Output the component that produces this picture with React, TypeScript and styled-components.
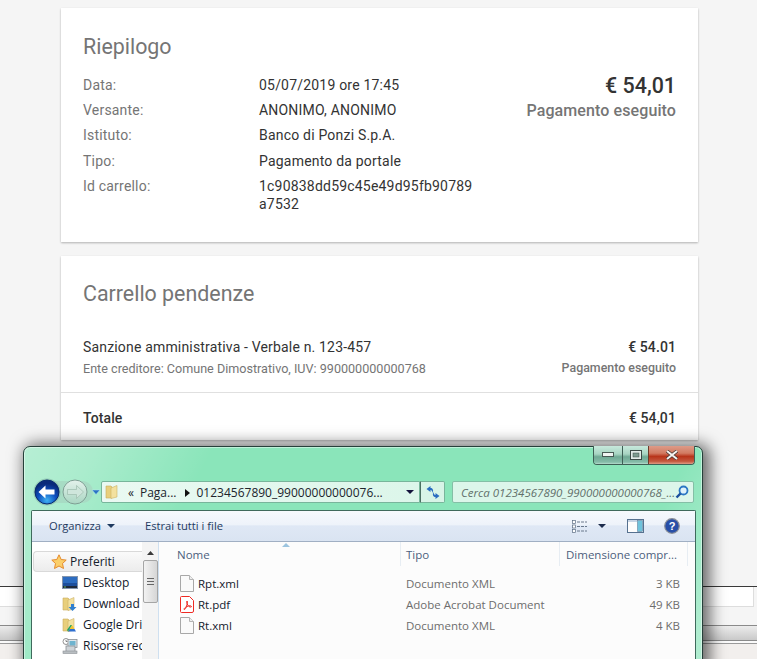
import React from "react";
import styled, { createGlobalStyle } from "styled-components";

const Global = createGlobalStyle`
  html, body { margin: 0; padding: 0; background: #f5f5f5; }
  body { font-family: Roboto, "Liberation Sans", sans-serif; }
  * { box-sizing: border-box; }
  svg { flex: none; }
`;

const Page = styled.div`
  position: relative;
  width: 757px;
  height: 659px;
  overflow: hidden;
  background: #f5f5f5;
  padding-top: 8px;
`;

const Card = styled.section`
  width: 637px;
  margin-left: 61px;
  background: #fff;
  box-shadow: 0 1px 2px rgba(0, 0, 0, 0.28);
`;

const SummaryCard = styled(Card)`
  height: 234px;
  padding: 26px 22px 0;
  display: grid;
  grid-template-columns: 392px 1fr;
`;

const CartCard = styled(Card)`
  height: 184px;
  margin-top: 14px;
`;

const Title = styled.h2`
  margin: 0;
  font-size: 21.4px;
  line-height: 26px;
  font-weight: 400;
  color: #757575;
`;

const Facts = styled.dl`
  margin: 16px 0 0;
  display: grid;
  grid-template-columns: 176px 216px;
  font-size: 14px;
  letter-spacing: 0.2px;
  line-height: 18px;
  row-gap: 7.2px;
`;

const Label = styled.dt`
  color: #757575;
`;

const Value = styled.dd`
  margin: 0;
  color: #333;
  word-break: break-all;
`;

const Outcome = styled.div`
  margin-top: 39px;
  text-align: right;
`;

const Amount = styled.div`
  font-size: 21.4px;
  line-height: 26px;
  font-weight: 500;
  color: #333;
`;

const Status = styled.div`
  font-size: 16px;
  letter-spacing: 0.1px;
  line-height: 24px;
  font-weight: 500;
  color: #757575;
`;

const CartHead = styled.div`
  padding: 25px 22px 0;
  height: 80px;
`;

const PendingRow = styled.div`
  height: 57px;
  padding: 0 22px;
  display: flex;
  justify-content: space-between;
  border-bottom: 1px solid #e0e0e0;
`;

const PendingTitle = styled.div`
  font-size: 14px;
  letter-spacing: 0.17px;
  line-height: 23px;
  color: #333;
`;

const PendingSub = styled.div`
  font-size: 12.6px;
  line-height: 19px;
  color: #757575;
`;

const PendingAmount = styled.div`
  font-size: 14px;
  letter-spacing: 0.1px;
  line-height: 23px;
  font-weight: 500;
  color: #333;
  text-align: right;
`;

const PendingStatus = styled.div`
  font-size: 12.4px;
  line-height: 17px;
  font-weight: 500;
  color: #757575;
  text-align: right;
`;

const TotalRow = styled.div`
  height: 47px;
  padding: 2px 22px 0;
  display: flex;
  align-items: center;
  justify-content: space-between;
  font-size: 14px;
  letter-spacing: 0.1px;
  font-weight: 500;
  color: #333;
`;

const Backdrop = styled.div`
  margin-top: 146px;
  border-top: 1px solid #3a3a3a;
`;

const BackdropField = styled.div`
  width: 754px;
  height: 20px;
  background: #fff;
  border-bottom: 1px solid #ddd;
  border-right: 1px solid #ddd;
`;

const BackdropBar = styled.div`
  margin-top: 18px;
  height: 16px;
  border-top: 1px solid #8a8a8a;
  border-bottom: 1px solid #8a8a8a;
  background: linear-gradient(#ececec, #c9c9c9);
`;

const BackdropRule = styled.div`
  height: 2px;
  background: #fafafa;
  border-bottom: 1px solid #9a9a9a;
  box-sizing: content-box;
`;

const BackdropFoot = styled.div`
  height: 40px;
  background: #f2efed;
`;

const Win = styled.div`
  position: absolute;
  left: 23px;
  top: 446px;
  width: 680px;
  height: 224px;
  padding: 0 7px;
  border: 1px solid #26403a;
  border-radius: 7px 7px 0 0;
  box-shadow: 4px 1px 16px 3px rgba(0, 0, 0, 0.58), inset 0 0 0 1px rgba(255, 255, 255, 0.45);
  background:
    linear-gradient(118deg, rgba(255, 255, 255, 0.38) 0, rgba(255, 255, 255, 0.28) 9%, rgba(255, 255, 255, 0) 24%, rgba(255, 255, 255, 0) 84%, rgba(255, 255, 255, 0.32) 97%),
    #8ae5ba;
  font-family: "Open Sans", "Noto Sans", sans-serif;
`;

const WinControls = styled.div`
  position: absolute;
  top: -1px;
  right: 7px;
  display: flex;
  height: 19px;
  border: 1px solid #3e5f55;
  border-top: none;
  border-radius: 0 0 4px 4px;
  overflow: hidden;
`;

const WinButton = styled.div<{ $w: number; $close?: boolean }>`
  width: ${(p) => p.$w}px;
  display: flex;
  align-items: center;
  justify-content: center;
  border-left: 1px solid ${(p) => (p.$close ? "#6d3a2a" : "#3e5f55")};
  background: ${(p) =>
    p.$close
      ? "linear-gradient(#dd9b88 0, #d27a62 40%, #b8341a 58%, #c4573f 85%, #e09a84 100%)"
      : "linear-gradient(#c7e9dc 0, #a7d4c2 45%, #6fa994 60%, #86bca9 90%, #b7dccd 100%)"};
  &:first-child { border-left: none; }
`;

const NavRow = styled.div`
  margin-top: 34px;
  height: 22px;
  display: flex;
  align-items: center;
  padding-left: 2px;
`;

const NavPill = styled.div`
  width: 67px;
  height: 26px;
  display: flex;
  align-items: center;
  flex: none;
`;

const AddressBar = styled.div`
  width: 319px;
  height: 22px;
  margin-left: 1px;
  flex: none;
  display: flex;
  align-items: center;
  border: 1px solid #78b59b;
  border-radius: 2px 0 0 2px;
  background: linear-gradient(90deg, #eaf9f2, #dcf6ea);
  font-size: 12px;
  color: #20242c;
  padding-left: 3px;
  white-space: nowrap;
`;

const Crumb = styled.span<{ $gap?: number }>`
  margin-left: ${(p) => p.$gap ?? 0}px;
`;

const AddressEnd = styled.div`
  flex: 1;
  display: flex;
  justify-content: flex-end;
  padding-right: 5px;
`;

const RefreshBox = styled.div`
  width: 25px;
  height: 22px;
  flex: none;
  display: flex;
  align-items: center;
  justify-content: center;
  border: 1px solid #78b59b;
  border-left: 1px solid #4b6f62;
  border-radius: 0 2px 2px 0;
  background: #d8f4e7;
`;

const SearchBox = styled.div`
  width: 242px;
  height: 22px;
  margin-left: 7px;
  flex: none;
  display: flex;
  align-items: center;
  justify-content: space-between;
  padding: 0 5px 0 8px;
  border: 1px solid #84bfa6;
  border-radius: 2px;
  background: #dcf6ea;
  font-size: 11.5px;
  font-style: italic;
  color: #62706b;
  white-space: nowrap;
`;

const Pane = styled.div`
  margin-top: 7px;
  width: 665px;
  height: 170px;
  background: #fff;
  border: 1px solid #3f6a5c;
  border-bottom: none;
  border-radius: 2px 2px 0 0;
`;

const Toolbar = styled.div`
  height: 31px;
  display: flex;
  align-items: center;
  padding: 0 14px 0 17px;
  border-bottom: 1px solid #a0afc3;
  background: linear-gradient(#f6f9fd 0, #eef3fa 45%, #dfe8f5 50%, #dae4f2 100%);
  font-size: 11.2px;
  color: #1e3a5f;
`;

const ToolbarLabel = styled.span`
  margin-bottom: 2px;
`;

const ToolbarGap = styled.span<{ $w: number }>`
  flex: none;
  width: ${(p) => p.$w}px;
  display: inline-block;
`;

const ToolbarEnd = styled.div`
  margin-left: auto;
  display: flex;
  align-items: center;
  padding-right: 1px;
`;

const PaneBody = styled.div`
  display: flex;
  height: 140px;
  background: #fcfcfc;
`;

const Tree = styled.div`
  width: 110px;
  flex: none;
  padding: 9px 0 0 1px;
  overflow: hidden;
  background: #fff;
`;

const TreeHead = styled.div`
  width: 109px;
  height: 21px;
  display: flex;
  align-items: center;
  padding-left: 17px;
  gap: 3px;
  font-size: 12px;
  color: #14202c;
  border: 1px solid #d9d9d9;
  border-right: none;
  border-radius: 4px 0 0 4px;
  background: linear-gradient(#fafafa, #ececec);
  white-space: nowrap;
`;

const TreeItem = styled.div`
  height: 21px;
  display: flex;
  align-items: center;
  gap: 5px;
  padding-left: 29px;
  font-size: 12px;
  color: #14202c;
  white-space: nowrap;
  &:first-of-type { margin-top: 1px; }
`;

const Scrollbar = styled.div`
  width: 17px;
  flex: none;
  display: flex;
  flex-direction: column;
  align-items: center;
  padding-top: 9px;
  background: #f4f4f4;
  border-right: 1px solid #cfe0f0;
`;

const ScrollThumb = styled.div`
  width: 15px;
  height: 43px;
  margin-top: 5px;
  display: flex;
  align-items: center;
  justify-content: center;
  border: 1px solid #a5a5a5;
  border-radius: 2px;
  background: linear-gradient(90deg, #f2f2f2, #d6d6d6);
`;

const Files = styled.div`
  flex: 1;
  position: relative;
  min-width: 0;
`;

const SortMark = styled.div`
  position: absolute;
  left: 123px;
  top: 1px;
  width: 0;
  height: 0;
  border-left: 4px solid transparent;
  border-right: 4px solid transparent;
  border-bottom: 4px solid #9cc4df;
`;

const HeaderRow = styled.div`
  display: grid;
  grid-template-columns: 242px 159px 128px 1fr;
  height: 24px;
  margin-bottom: 7px;
  font-size: 11.5px;
  color: #4c5f7c;
`;

const HeaderCell = styled.div<{ $first?: boolean; $pad?: number }>`
  padding-left: ${(p) => p.$pad ?? 5}px;
  border-right: 1px solid #e7edf3;
  display: flex;
  align-items: center;
  padding-top: 1px;
  white-space: nowrap;
`;

const FileRow = styled.div`
  display: grid;
  grid-template-columns: 242px 159px 120px;
  height: 21px;
  align-items: center;
  font-size: 11.5px;
`;

const FileName = styled.div`
  display: flex;
  align-items: center;
  gap: 4px;
  padding-left: 21px;
  color: #14202c;
`;

const FileType = styled.div`
  padding-left: 5px;
  color: #6d6d6d;
  white-space: nowrap;
`;

const FileSize = styled.div`
  text-align: right;
  color: #6d6d6d;
`;

const Caret = ({ color = "#1e3a5f", w = 8, h = 4 }: { color?: string; w?: number; h?: number }) => (
  <svg width={w} height={h} viewBox="0 0 8 4"><path d="M0 0h8L4 4z" fill={color} /></svg>
);

const Folder = ({ badge }: { badge?: "down" | "drive" }) => (
  <svg width="16" height="16" viewBox="0 0 16 16">
    <path d="M1 2h5l1 1v11H1z" fill="#e8cf7c" stroke="#c9ad5c" strokeWidth="0.6" />
    <path d="M6 4l6-2.5V13l-6 1.5z" fill="#f3e19f" stroke="#cdb266" strokeWidth="0.6" />
    {badge === "down" && <path d="M9 8h3v3h2.500l-4 4-4-4H9z" fill="#2f7fd0" />}
    {badge === "drive" && (
      <g>
        <path d="M10 8l2.500 4H7.500z" fill="#f4c430" />
        <path d="M7.500 12h5l1.500 2.500H6z" fill="#2f6fd0" />
        <path d="M10 8L6 14.500 5 13l3.500-5z" fill="#1fa463" />
      </g>
    )}
  </svg>
);

const DocIcon = () => (
  <svg width="14" height="17" viewBox="0 0 14 17">
    <path d="M.5.5h9l4 4v12H.5z" fill="#fafafa" stroke="#a8a8a8" />
    <path d="M9.500.5v4h4" fill="#eee" stroke="#b5b5b5" />
  </svg>
);

const PdfIcon = () => (
  <svg width="14" height="17" viewBox="0 0 14 17">
    <path d="M1.500.5h8l4 4v10.500a1.500 1.500 0 0 1-1.500 1.500H1.500A1 1 0 0 1 .5 15.500v-14a1 1 0 0 1 1-1z" fill="#fff" stroke="#ee2a24" />
    <path d="M7 5c-.8 2 .6 4 2 5.500 1 .8 2.500.8 2.500 0S9 9.500 7 10.500c-2 .8-3.500 2.500-2.800 3 .8.300 1.800-1.500 2.300-3.300C7 8.500 7.800 6 7 5z" fill="none" stroke="#ee2a24" strokeWidth="1" />
  </svg>
);

const Star = () => (
  <svg width="16" height="16" viewBox="0 0 16 16">
    <path d="M8 .8l2.200 4.700 5 .6-3.700 3.400 1 5L8 12l-4.500 2.500 1-5L.8 6.100l5-.6z" fill="#fbcf6a" stroke="#e58a2c" strokeWidth="1" />
  </svg>
);

const DesktopIcon = () => (
  <svg width="16" height="14" viewBox="0 0 16 14">
    <rect x="0.500" y="0.500" width="15" height="12" fill="#1d4f9c" stroke="#8294ad" />
    <rect x="1" y="1" width="14" height="6" fill="#2c6cc0" />
    <rect x="1" y="10" width="14" height="2" fill="#202a3a" />
    <rect x="2" y="10.500" width="2" height="1" fill="#5fb36a" />
  </svg>
);

const ComputerIcon = () => (
  <svg width="16" height="16" viewBox="0 0 16 16">
    <circle cx="4" cy="3.500" r="3" fill="#fff" stroke="#777" strokeWidth="0.800" />
    <path d="M4 2v1.500h1.500" stroke="#555" strokeWidth="0.700" fill="none" />
    <rect x="6" y="1.500" width="9" height="8" fill="#dfe6ea" stroke="#8a8f94" strokeWidth="0.800" />
    <rect x="7.500" y="3" width="6" height="4.500" fill="#6fb4cf" />
    <rect x="4" y="8" width="9" height="6" fill="#cfd4d8" stroke="#8a8f94" strokeWidth="0.800" />
    <rect x="1" y="13" width="14" height="2.500" fill="#b9bec2" stroke="#8a8f94" strokeWidth="0.600" />
  </svg>
);

function BackForward() {
  return (
    <NavPill>
      <svg width="67" height="28" viewBox="0 0 67 28">
        <defs>
          <radialGradient id="bk" cx="50%" cy="85%" r="70%">
            <stop offset="0" stopColor="#3fb2f2" />
            <stop offset="0.55" stopColor="#0d4fc0" />
            <stop offset="1" stopColor="#0a2a7a" />
          </radialGradient>
          <linearGradient id="fw" x1="0" y1="0" x2="0" y2="1">
            <stop offset="0" stopColor="#e4f2ec" />
            <stop offset="1" stopColor="#a9d6c2" />
          </linearGradient>
        </defs>
        <rect x="2" y="3" width="58" height="22" rx="11" fill="#a7dcc4" />
        <circle cx="14" cy="14" r="13.500" fill="#86b6a8" opacity="0.7" />
        <circle cx="14" cy="14" r="12" fill="url(#bk)" stroke="#082a6e" />
        <path d="M5.500 14L12.500 7.500v4h9v5h-9v4z" fill="#fff" />
        <circle cx="42" cy="14" r="12" fill="url(#fw)" stroke="#7f9f94" />
        <path d="M50.500 14L43.500 7.500v4h-9v5h9v4z" fill="#cfe6dc" stroke="#9dbbae" strokeWidth="0.700" />
        <path d="M59 12h8l-4 4.500z" fill="#2b74c4" stroke="#b8e6f4" strokeWidth="0.500" />
      </svg>
    </NavPill>
  );
}

export default function App() {
  return (
    <Page>
      <Global />
      <SummaryCard>
        <div>
          <Title>Riepilogo</Title>
          <Facts>
            <Label>Data:</Label>
            <Value>05/07/2019 ore 17:45</Value>
            <Label>Versante:</Label>
            <Value>ANONIMO, ANONIMO</Value>
            <Label>Istituto:</Label>
            <Value>Banco di Ponzi S.p.A.</Value>
            <Label>Tipo:</Label>
            <Value>Pagamento da portale</Value>
            <Label>Id carrello:</Label>
            <Value>1c90838dd59c45e49d95fb90789a7532</Value>
          </Facts>
        </div>
        <Outcome>
          <Amount>€ 54,01</Amount>
          <Status>Pagamento eseguito</Status>
        </Outcome>
      </SummaryCard>

      <CartCard>
        <CartHead>
          <Title>Carrello pendenze</Title>
        </CartHead>
        <PendingRow>
          <div>
            <PendingTitle>Sanzione amministrativa - Verbale n. 123-457</PendingTitle>
            <PendingSub>Ente creditore: Comune Dimostrativo, IUV: 990000000000768</PendingSub>
          </div>
          <div>
            <PendingAmount>€ 54.01</PendingAmount>
            <PendingStatus>Pagamento eseguito</PendingStatus>
          </div>
        </PendingRow>
        <TotalRow>
          <span>Totale</span>
          <span>€ 54,01</span>
        </TotalRow>
      </CartCard>

      <Backdrop>
        <BackdropField />
        <BackdropBar />
        <BackdropRule />
        <BackdropFoot />
      </Backdrop>

      <Win>
        <WinControls>
          <WinButton $w={28}>
            <svg width="12" height="6" viewBox="0 0 12 6"><rect x="0.500" y="0.500" width="11" height="4" fill="#f0f4f2" stroke="#4a5a55" /></svg>
          </WinButton>
          <WinButton $w={26}>
            <svg width="12" height="10" viewBox="0 0 12 10"><rect x="0.500" y="0.500" width="11" height="9" fill="#e2ece8" stroke="#3d4a46" /><rect x="3" y="3" width="6" height="4" fill="#7d9c90" stroke="#3d4a46" strokeWidth="0.500" /></svg>
          </WinButton>
          <WinButton $w={46} $close>
            <svg width="12" height="10" viewBox="0 0 12 10"><path d="M1 1l10 8M11 1L1 9" stroke="#4a3a36" strokeWidth="3.400" /><path d="M1 1l10 8M11 1L1 9" stroke="#f6f3f1" strokeWidth="2" /></svg>
          </WinButton>
        </WinControls>

        <NavRow>
          <BackForward />
          <AddressBar>
            <Folder />
            <Crumb $gap={7}>«</Crumb>
            <Crumb $gap={6}>Paga...</Crumb>
            <Crumb $gap={9}>
              <svg width="5" height="8" viewBox="0 0 5 8"><path d="M0 0l5 4-5 4z" fill="#111" /></svg>
            </Crumb>
            <Crumb $gap={6}>01234567890_99000000000076...</Crumb>
            <AddressEnd><Caret color="#14143c" /></AddressEnd>
          </AddressBar>
          <RefreshBox>
            <svg width="14" height="13" viewBox="0 0 14 13">
              <path d="M6.500 7C6.500 5 5.500 4 4.500 4V6L.5 3 4.500 0v2c2 0 3.500 2 2 5z" fill="#2a6dc0" />
              <path d="M7.500 6C7.500 8 8.500 9 9.500 9V7l4 3-4 3v-2c-2 0-3.500-2-2-5z" fill="#2a6dc0" />
            </svg>
          </RefreshBox>
          <SearchBox>
            <span>Cerca 01234567890_990000000000768_...</span>
            <svg width="14" height="14" viewBox="0 0 14 14">
              <circle cx="8.500" cy="5.500" r="4" fill="#dff2fb" stroke="#2c77c4" strokeWidth="1.800" />
              <path d="M5.500 8.500L1.500 12.500" stroke="#1c4f9c" strokeWidth="2.400" />
            </svg>
          </SearchBox>
        </NavRow>

        <Pane>
          <Toolbar>
            <ToolbarLabel>Organizza</ToolbarLabel>
            <ToolbarGap $w={6} />
            <Caret />
            <ToolbarGap $w={30} />
            <ToolbarLabel>Estrai tutti i file</ToolbarLabel>
            <ToolbarEnd>
              <svg width="16" height="13" viewBox="0 0 16 13">
                <g fill="#fff" stroke="#5b6b80" strokeWidth="0.700">
                  <rect x="0.500" y="0.500" width="3" height="3" />
                  <rect x="0.500" y="5" width="3" height="3" />
                  <rect x="0.500" y="9.500" width="3" height="3" />
                </g>
                <path d="M5 2h10M5 6.500h10M5 11h10" stroke="#5b6b80" strokeWidth="0.900" strokeDasharray="3 1" />
              </svg>
              <ToolbarGap $w={10} />
              <Caret color="#1c2c4c" />
              <ToolbarGap $w={21} />
              <svg width="17" height="14" viewBox="0 0 17 14">
                <rect x="0.500" y="0.500" width="16" height="13" fill="#fdfdfd" stroke="#56718f" />
                <rect x="10.500" y="1.500" width="5" height="11" fill="#6fc3dc" stroke="#56718f" strokeWidth="0.500" />
                <rect x="1" y="1" width="9" height="2" fill="#c8d6e6" />
              </svg>
              <ToolbarGap $w={20} />
              <svg width="16" height="16" viewBox="0 0 16 16">
                <circle cx="8" cy="8" r="7.300" fill="#274fa8" stroke="#8a8f98" strokeWidth="1.200" />
                <text x="8" y="12" textAnchor="middle" fontSize="11" fontWeight="700" fill="#fff" fontFamily="Liberation Sans, sans-serif">?</text>
              </svg>
            </ToolbarEnd>
          </Toolbar>
          <PaneBody>
            <Tree>
              <TreeHead><Star />Preferiti</TreeHead>
              <TreeItem><DesktopIcon />Desktop</TreeItem>
              <TreeItem><Folder badge="down" />Download</TreeItem>
              <TreeItem><Folder badge="drive" />Google Drive</TreeItem>
              <TreeItem><ComputerIcon />Risorse recenti</TreeItem>
            </Tree>
            <Scrollbar>
              <svg width="7" height="4" viewBox="0 0 7 4"><path d="M0 4l3.500-4L7 4z" fill="#3a3a3a" /></svg>
              <ScrollThumb>
                <svg width="7" height="7" viewBox="0 0 7 7"><path d="M0 .5h7M0 3.500h7M0 6.500h7" stroke="#666" /></svg>
              </ScrollThumb>
            </Scrollbar>
            <Files>
              <SortMark />
              <HeaderRow>
                <HeaderCell $pad={18}>Nome</HeaderCell>
                <HeaderCell>Tipo</HeaderCell>
                <HeaderCell $pad={6}>Dimensione compr...</HeaderCell>
                <div />
              </HeaderRow>
              <FileRow>
                <FileName><DocIcon />Rpt.xml</FileName>
                <FileType>Documento XML</FileType>
                <FileSize>3 KB</FileSize>
              </FileRow>
              <FileRow>
                <FileName><PdfIcon />Rt.pdf</FileName>
                <FileType>Adobe Acrobat Document</FileType>
                <FileSize>49 KB</FileSize>
              </FileRow>
              <FileRow>
                <FileName><DocIcon />Rt.xml</FileName>
                <FileType>Documento XML</FileType>
                <FileSize>4 KB</FileSize>
              </FileRow>
            </Files>
          </PaneBody>
        </Pane>
      </Win>
    </Page>
  );
}
